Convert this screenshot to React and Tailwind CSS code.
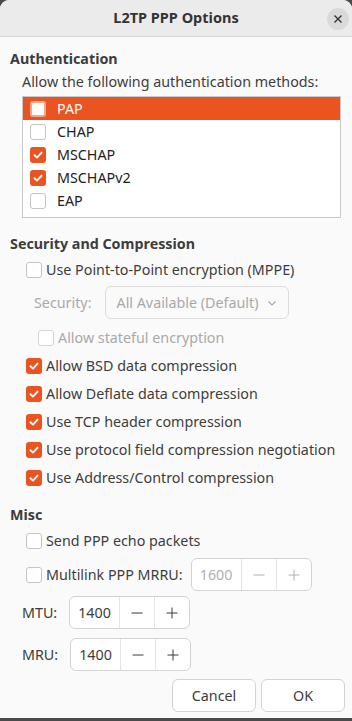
import React from "react";

const font = { fontFamily: '"Noto Sans", "Open Sans", sans-serif' };

function Box({ checked, disabled, selected }) {
  if (checked) {
    return (
      <span className="w-[16px] h-[16px] rounded-[3px] bg-[#e95420] flex items-center justify-center shrink-0">
        <svg width="12" height="12" viewBox="0 0 12 12">
          <path d="M2.5 6.2 L5 8.6 L9.6 3.6" fill="none" stroke="white" strokeWidth="1.9" strokeLinecap="round" strokeLinejoin="round" />
        </svg>
      </span>
    );
  }
  if (selected) {
    return <span className="w-[16px] h-[16px] rounded-[3px] bg-white border-2 border-[#f4a98a] shrink-0 box-border" />;
  }
  return (
    <span
      className={
        "w-[16px] h-[16px] rounded-[3px] bg-white border shrink-0 box-border " +
        (disabled ? "border-[#d5d5d5]" : "border-[#c4c4c4]")
      }
    />
  );
}

function Check({ label, checked, disabled, className = "" }) {
  return (
    <div className={"flex items-center gap-[4px] h-[28px] " + className}>
      <Box checked={checked} disabled={disabled} />
      <span className={disabled ? "text-[#a9a9a9]" : "text-[#3d3d3d]"}>{label}</span>
    </div>
  );
}

function Spin({ value, disabled }) {
  const c = disabled ? "text-[#b0b0b0]" : "text-[#3d3d3d]";
  return (
    <div className="flex h-[33px] border border-[#d3d3d3] rounded-[6px] bg-white">
      <div className={"w-[49px] flex items-center justify-center " + c}>{value}</div>
      <div className={"w-[35px] border-l border-[#e3e3e3] flex items-center justify-center " + c}>
        <svg width="12" height="12" viewBox="0 0 12 12"><path d="M0.5 6 H11.5" stroke="currentColor" strokeWidth="1" /></svg>
      </div>
      <div className={"w-[35px] border-l border-[#e3e3e3] flex items-center justify-center " + c}>
        <svg width="12" height="12" viewBox="0 0 12 12"><path d="M0.5 6 H11.5 M6 0.5 V11.5" stroke="currentColor" strokeWidth="1" /></svg>
      </div>
    </div>
  );
}

export default function App() {
  const methods = [
    ["PAP", false],
    ["CHAP", false],
    ["MSCHAP", true],
    ["MSCHAPv2", true],
    ["EAP", false],
  ];
  return (
    <div className="w-[352px] h-[721px] bg-[#4a4a4a] text-[14.3px]" style={font}>
      <div className="w-[352px] h-[718px] rounded-t-[9px] bg-[#fafafa] overflow-hidden flex flex-col">
        <div className="h-[37px] bg-[#ebebeb] border-b border-[#d6d6d6] flex items-center justify-center relative shrink-0">
          <span className="font-bold text-[14.5px] text-[#333333]">L2TP PPP Options</span>
          <div className="absolute right-[3px] top-[8px] w-[22px] h-[22px] rounded-full bg-[#dadada] flex items-center justify-center">
            <svg width="10" height="10" viewBox="0 0 10 10">
              <path d="M1.5 1.5 L8.5 8.5 M8.5 1.5 L1.5 8.5" stroke="#333" strokeWidth="1.4" />
            </svg>
          </div>
        </div>

        <div className="flex flex-col px-[10px] text-[#3d3d3d]">
          <div className="font-bold mt-[11px] h-[22px] flex items-center">Authentication</div>
          <div className="ml-[12px] mt-[1px] h-[22px] flex items-center">Allow the following authentication methods:</div>
          <div className="ml-[12px] mt-[3px] w-[319px] border border-[#c9c9c9] bg-white pb-[5px]">
            {methods.map(([m, c], i) => (
              <div
                key={m}
                className={
                  "h-[23px] flex items-center pl-[7px] gap-[11px] " +
                  (i === 0 ? "bg-[#e95420] text-white" : "text-[#222]")
                }
              >
                <Box checked={c} selected={i === 0} />
                <span>{m}</span>
              </div>
            ))}
          </div>

          <div className="font-bold mt-[15px] h-[22px] flex items-center">Security and Compression</div>
          <Check label="Use Point-to-Point encryption (MPPE)" className="ml-[16px] mt-[1px]" />
          <div className="flex items-center ml-[24px] mt-[2px] h-[33px] gap-[13px]">
            <span className="text-[#a9a9a9]">Security:</span>
            <div className="w-[184px] h-[33px] border border-[#dcdcdc] rounded-[6px] flex items-center px-[11px] justify-between text-[#a9a9a9]">
              <span>All Available (Default)</span>
              <svg width="10" height="10" viewBox="0 0 10 10"><path d="M1.5 3.5 L5 7 L8.5 3.5" fill="none" stroke="#a9a9a9" strokeWidth="1.2" /></svg>
            </div>
          </div>
          <Check label="Allow stateful encryption" disabled className="ml-[28px] mt-[5px]" />
          <Check label="Allow BSD data compression" checked className="ml-[16px]" />
          <Check label="Allow Deflate data compression" checked className="ml-[16px]" />
          <Check label="Use TCP header compression" checked className="ml-[16px]" />
          <Check label="Use protocol field compression negotiation" checked className="ml-[16px]" />
          <Check label="Use Address/Control compression" checked className="ml-[16px]" />

          <div className="font-bold mt-[12px] h-[22px] flex items-center">Misc</div>
          <Check label="Send PPP echo packets" className="ml-[16px] mt-[1px]" />
          <div className="flex items-center ml-[16px] mt-[3px] gap-[8px]">
            <Check label="Multilink PPP MRRU:" />
            <Spin value="1600" disabled />
          </div>
          <div className="flex items-center ml-[12px] mt-[5px] gap-[12px]">
            <span className="w-[35px]">MTU:</span>
            <Spin value="1400" />
          </div>
          <div className="flex items-center ml-[12px] mt-[9px] gap-[12px]">
            <span className="w-[36px]">MRU:</span>
            <Spin value="1400" />
          </div>
          <div className="flex justify-end gap-[5px] mt-[8px] mr-[-3px]">
            <div className="w-[84px] h-[33px] border border-[#d3d3d3] rounded-[6px] bg-white flex items-center justify-center">Cancel</div>
            <div className="w-[84px] h-[33px] border border-[#d3d3d3] rounded-[6px] bg-white flex items-center justify-center">OK</div>
          </div>
        </div>
      </div>
    </div>
  );
}
